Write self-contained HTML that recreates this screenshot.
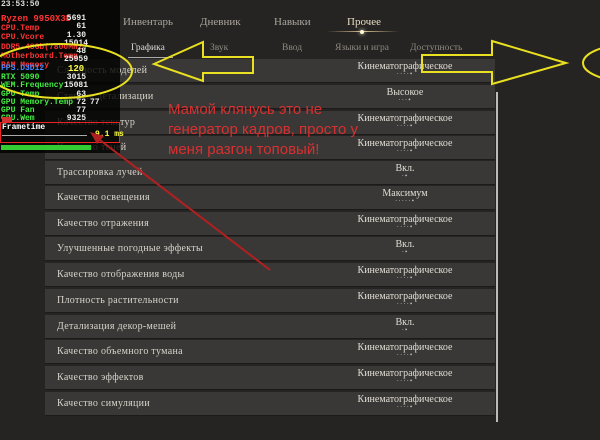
<!DOCTYPE html><html><head><meta charset="utf-8"><style>
body{margin:0;width:600px;height:440px;overflow:hidden;background:#262422;font-family:"Liberation Serif","Noto Serif CJK SC",serif;position:relative}
.a{position:absolute}
.tab{position:absolute;top:16px;color:#a9a49c;font-size:11px}
.sub{position:absolute;top:43px;color:#8d8880;font-size:9.5px}
.row{position:absolute;left:45px;width:450px;height:23px;background:#3a3836;border-bottom:1px solid #1c1b1a}
.row .l{position:absolute;left:12px;top:6px;color:#d8d4cc;font-size:10px;letter-spacing:.3px}
.row .v{position:absolute;left:300px;width:120px;text-align:center;top:2px;color:#e0dcd4;font-size:10px}
.row .d{position:absolute;left:300px;width:120px;text-align:center;top:11px;color:#bbb;font-size:7px;letter-spacing:1px}
.o{position:absolute;font-family:"Liberation Mono",monospace;font-size:8px;font-weight:bold;line-height:8.3px}
</style></head><body>
<div class="tab" style="left:123px">Инвентарь</div>
<div class="tab" style="left:200px">Дневник</div>
<div class="tab" style="left:274px">Навыки</div>
<div class="tab" style="left:347px;color:#e8dcc0">Прочее</div>
<div class="a" style="left:327px;top:31px;width:72px;height:1px;background:linear-gradient(90deg,transparent,#d8c090,transparent)"></div>
<div class="a" style="left:360px;top:30px;width:4px;height:4px;border-radius:2px;background:#fff8d0;box-shadow:0 0 4px #ffe"></div>
<div class="sub" style="left:131px;color:#ddd">Графика</div>
<div class="a" style="left:128px;top:57px;width:45px;height:1px;background:#aaa"></div>
<div class="sub" style="left:210px">Звук</div>
<div class="sub" style="left:282px">Ввод</div>
<div class="sub" style="left:335px">Языки и игра</div>
<div class="sub" style="left:410px">Доступность</div>
<div class="a" style="left:496px;top:92px;width:2px;height:330px;background:#bbb"></div>
<div class="row" style="top:59px"><div class="l">Сложность моделей</div><div class="v">Кинематографическое</div><div class="d">····•</div></div>
<div class="row" style="top:85px"><div class="l">Степень детализации</div><div class="v">Высокое</div><div class="d">···•</div></div>
<div class="row" style="top:111px"><div class="l">Качество текстур</div><div class="v">Кинематографическое</div><div class="d">····•</div></div>
<div class="row" style="top:136px"><div class="l">Качество теней</div><div class="v">Кинематографическое</div><div class="d">····•</div></div>
<div class="row" style="top:161px"><div class="l">Трассировка лучей</div><div class="v">Вкл.</div><div class="d">·•</div></div>
<div class="row" style="top:186px"><div class="l">Качество освещения</div><div class="v">Максимум</div><div class="d">·····•</div></div>
<div class="row" style="top:212px"><div class="l">Качество отражения</div><div class="v">Кинематографическое</div><div class="d">····•</div></div>
<div class="row" style="top:237px"><div class="l">Улучшенные погодные эффекты</div><div class="v">Вкл.</div><div class="d">·•</div></div>
<div class="row" style="top:263px"><div class="l">Качество отображения воды</div><div class="v">Кинематографическое</div><div class="d">····•</div></div>
<div class="row" style="top:289px"><div class="l">Плотность растительности</div><div class="v">Кинематографическое</div><div class="d">····•</div></div>
<div class="row" style="top:315px"><div class="l">Детализация декор-мешей</div><div class="v">Вкл.</div><div class="d">·•</div></div>
<div class="row" style="top:340px"><div class="l">Качество объемного тумана</div><div class="v">Кинематографическое</div><div class="d">····•</div></div>
<div class="row" style="top:366px"><div class="l">Качество эффектов</div><div class="v">Кинематографическое</div><div class="d">····•</div></div>
<div class="row" style="top:392px"><div class="l">Качество симуляции</div><div class="v">Кинематографическое</div><div class="d">····•</div></div>
<!-- overlay -->
<div class="a" style="left:0;top:0;width:120px;height:153px;background:rgba(0,0,0,.8)"></div>
<div class="o" style="left:1px;top:1px;color:#ddd">23:53:50</div>
<div class="o" style="left:1px;top:15px;color:#f33;font-size:9px;line-height:9px">Ryzen 9950X3D<br><span style="font-size:8px;line-height:8.3px">CPU.Temp<br>CPU.Vcore<br>DDR5-48Gb(7800MHz)<br>Motherboard.Temp<br>RAM Memory</span></div>
<div class="o" style="left:1px;top:65px;color:#48f">FPS.D3D12</div>
<div class="o" style="left:1px;top:74px;color:#4e4;line-height:8.3px">RTX 5090<br>WEM.Frequency<br>GPU Temp<br>GPU Memory.Temp<br>GPU Fan<br>GPU.Wem</div>
<div class="o" style="left:64px;top:15px;color:#eee;text-align:right;width:22px">5691<br>61<br>1.30<br>15014<br>48<br>25959</div>
<div class="o" style="left:68px;top:65px;color:#ff4;font-size:9px">120</div>
<div class="o" style="left:64px;top:74px;color:#eee;text-align:right;width:22px">3015<br>15081<br>63<br>72<br>77<br>9325</div>
<div class="o" style="left:90px;top:99px;color:#eee">77</div>
<div class="a" style="left:2px;top:117px;width:10px;height:6px;background:#c33"></div>
<div class="a" style="left:0;top:122px;width:118px;height:19px;border:1px solid #e22"></div>
<div class="o" style="left:2px;top:124px;color:#fff">Frametime</div>
<div class="o" style="left:95px;top:131px;color:#ff4">9.1 ms</div>
<div class="a" style="left:2px;top:135px;width:85px;height:1px;background:#aaa"></div>
<div class="a" style="left:1px;top:145px;width:90px;height:5px;background:#3c3"></div>
<svg class="a" style="left:0;top:0" width="600" height="440">
<ellipse cx="60" cy="71" rx="72" ry="27" fill="none" stroke="#e8e020" stroke-width="2"/>
<ellipse cx="640" cy="63" rx="57" ry="20" fill="none" stroke="#e8e020" stroke-width="2"/>
<polygon points="154,64 203,42 203,57 253,57 253,73 203,73 203,81" fill="none" stroke="#e8e020" stroke-width="2"/>
<polygon points="422,55 492,55 492,41 566,63 492,84 492,72 422,72" fill="none" stroke="#e8e020" stroke-width="2"/>
<line x1="96" y1="137" x2="270" y2="270" stroke="#b02020" stroke-width="2"/>
<polygon points="90,132 104,136 97,144" fill="#b02020"/>
<text x="168" y="114" fill="#d83030" font-family="Liberation Sans,sans-serif" font-size="15">Мамой клянусь это не</text>
<text x="168" y="134" fill="#d83030" font-family="Liberation Sans,sans-serif" font-size="15">генератор кадров, просто у</text>
<text x="168" y="154" fill="#d83030" font-family="Liberation Sans,sans-serif" font-size="15">меня разгон топовый!</text>
</svg>
</body></html>
